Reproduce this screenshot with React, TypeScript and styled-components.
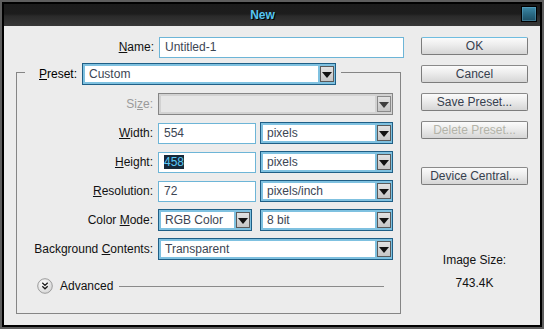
import React from 'react';
import styled, { createGlobalStyle } from 'styled-components';

const GlobalStyle = createGlobalStyle`
  html, body {
    margin: 0;
    padding: 0;
    background: #5e5e5e;
  }
  body {
    font-family: "Liberation Sans", Arial, sans-serif;
    font-size: 12px;
  }
`;

const Window = styled.div`
  width: 544px;
  height: 329px;
  box-sizing: border-box;
  border: 2px solid #5e5e5e;
  padding: 2px;
  background: #000;
  display: flex;
  flex-direction: column;
`;

const TitleBar = styled.div`
  height: 22px;
  flex: none;
  display: flex;
  align-items: flex-start;
  padding-right: 3px;
  background: linear-gradient(#1b1b1b 0%, #1d1d1d 45%, #2a2a2a 55%, #383838 100%);
`;

const Title = styled.div`
  flex: 1;
  text-align: center;
  font-weight: bold;
  font-size: 12px;
  line-height: 22px;
  color: #56c6f1;
  text-shadow: 1px 1px 0 #000;
`;

const CloseBox = styled.div`
  width: 16px;
  height: 16px;
  margin-top: 2px;
  box-sizing: border-box;
  border: 1px solid #000;
  background: linear-gradient(#3f8aa8, #2a6a84 50%, #1c4d62);
  box-shadow: inset 0 0 0 1px rgba(120, 190, 220, 0.35);
`;

const Content = styled.div`
  flex: 1;
  display: flex;
  background: #ececec;
`;

const FormCol = styled.div`
  width: 417px;
  padding-top: 10px;
  display: flex;
  flex-direction: column;
`;

const Row = styled.div`
  display: flex;
  align-items: center;
  gap: 4px;
  height: 22px;
`;

const Label = styled.div<{ $w: number; $disabled?: boolean }>`
  width: ${p => p.$w}px;
  flex: none;
  text-align: right;
  margin-right: 1px;
  color: ${p => (p.$disabled ? '#9a9a9a' : '#111')};
  white-space: nowrap;
`;

const TextField = styled.div<{ $w: number }>`
  width: ${p => p.$w}px;
  height: 21px;
  box-sizing: border-box;
  border: 1px solid #6db5d7;
  background: #fff;
  color: #3c4553;
  padding-left: 5px;
  display: flex;
  align-items: center;
`;

const Selected = styled.span`
  background: #17293a;
  color: #5ac8f6;
  line-height: 14px;
`;

const SelectBox = styled.div<{ $w: number; $disabled?: boolean; $ml?: number }>`
  width: ${p => p.$w}px;
  height: 22px;
  margin-left: ${p => p.$ml || 0}px;
  box-sizing: border-box;
  border: 1px solid ${p => (p.$disabled ? '#858585' : '#1f5f86')};
  background: ${p => (p.$disabled ? '#d2d2d2' : '#7fc1e0')};
  padding: 2px 1px 2px 2px;
  display: flex;
  gap: 2px;
`;

const SelectValue = styled.div<{ $disabled?: boolean }>`
  flex: 1;
  background: ${p => (p.$disabled ? '#e6e6e6' : '#fff')};
  color: #3c4553;
  padding-left: 4px;
  display: flex;
  align-items: center;
  white-space: nowrap;
  overflow: hidden;
`;

const ArrowBtn = styled.div<{ $disabled?: boolean }>`
  width: 14px;
  box-sizing: border-box;
  border: 1px solid ${p => (p.$disabled ? '#8a8a8a' : '#5a5a5a')};
  background: linear-gradient(#e2e2e2, #c6c6c6);
  display: flex;
  align-items: center;
  justify-content: center;
  &::after {
    content: '';
    border-left: 5px solid transparent;
    border-right: 5px solid transparent;
    border-top: 6px solid ${p => (p.$disabled ? '#3e3e3e' : '#111')};
    margin-top: 1px;
  }
`;

const Group = styled.div`
  width: 385px;
  margin: 14px 0 0 12px;
  box-sizing: border-box;
  border: 1px solid #858585;
  padding-bottom: 17px;
  display: flex;
  flex-direction: column;
`;

const Legend = styled.div`
  align-self: flex-start;
  margin: -10px 0 0 8px;
  padding: 0 5px 0 14px;
  background: #ececec;
  display: flex;
  align-items: center;
  gap: 5px;
  height: 22px;
`;

const Rows = styled.div`
  display: flex;
  flex-direction: column;
  gap: 7px;
  padding-top: 8px;
`;

const AdvancedRow = styled.div`
  display: flex;
  align-items: center;
  height: 20px;
  margin-top: 16px;
  padding: 0 16px 0 20px;
  color: #111;
`;

const AdvText = styled.span`
  margin: 0 6px 0 7px;
`;

const Rule = styled.div`
  flex: 1;
  height: 1px;
  background: #8a8a8a;
`;

const ButtonCol = styled.div`
  width: 107px;
  margin-left: auto;
  margin-right: 12px;
  padding-top: 11px;
  display: flex;
  flex-direction: column;
  gap: 10px;
`;

const Button = styled.div<{ $primary?: boolean; $disabled?: boolean; $gapTop?: number }>`
  height: 18px;
  box-sizing: border-box;
  border: 1px solid #7c7c7c;
  border-top-color: ${p => (p.$primary ? '#6fbde0' : '#8a8a8a')};
  border-radius: 2px;
  background: linear-gradient(#fbfbfb, #ececec 45%, #d6d6d6);
  color: ${p => (p.$disabled ? '#b3b3a8' : '#36404e')};
  display: flex;
  align-items: center;
  justify-content: center;
  margin-top: ${p => p.$gapTop || 0}px;
`;

const Info = styled.div<{ $gapTop: number }>`
  text-align: center;
  line-height: 14px;
  color: #111;
  margin-top: ${p => p.$gapTop}px;
`;

function Select({ w, value, disabled, ml }: { w: number; value?: string; disabled?: boolean; ml?: number }) {
  return (
    <SelectBox $w={w} $disabled={disabled} $ml={ml}>
      <SelectValue $disabled={disabled}>{value}</SelectValue>
      <ArrowBtn $disabled={disabled} />
    </SelectBox>
  );
}

function AdvancedIcon() {
  return (
    <svg width="16" height="16" viewBox="0 0 16 16">
      <defs>
        <radialGradient id="adv" cx="0.4" cy="0.35" r="0.7">
          <stop offset="0" stopColor="#ffffff" />
          <stop offset="1" stopColor="#d4d4d4" />
        </radialGradient>
      </defs>
      <circle cx="8" cy="8" r="7.3" fill="url(#adv)" stroke="#9c9c9c" strokeWidth="1" />
      <path d="M5.3 4.8 L8 7.4 L10.7 4.8 M5.3 8.2 L8 10.8 L10.7 8.2" fill="none" stroke="#1a1a1a" strokeWidth="1.3" />
    </svg>
  );
}

export default function App() {
  return (
    <>
      <GlobalStyle />
      <Window>
        <TitleBar>
          <Title>New</Title>
          <CloseBox />
        </TitleBar>
        <Content>
          <FormCol>
            <Row>
              <Label $w={150}><u>N</u>ame:</Label>
              <TextField $w={245}>Untitled-1</TextField>
            </Row>
            <Group>
              <Legend>
                <span><u>P</u>reset:</span>
                <Select w={254} value="Custom" />
              </Legend>
              <Rows>
                <Row>
                  <Label $w={136} $disabled>Si<u>z</u>e:</Label>
                  <Select w={235} disabled />
                </Row>
                <Row>
                  <Label $w={136}><u>W</u>idth:</Label>
                  <TextField $w={98}>554</TextField>
                  <Select w={133} value="pixels" />
                </Row>
                <Row>
                  <Label $w={136}><u>H</u>eight:</Label>
                  <TextField $w={98}><Selected>458</Selected></TextField>
                  <Select w={133} value="pixels" />
                </Row>
                <Row>
                  <Label $w={136}><u>R</u>esolution:</Label>
                  <TextField $w={98}>72</TextField>
                  <Select w={133} value="pixels/inch" />
                </Row>
                <Row>
                  <Label $w={136}>Color <u>M</u>ode:</Label>
                  <Select w={94} value="RGB Color" />
                  <Select w={133} value="8 bit" ml={4} />
                </Row>
                <Row>
                  <Label $w={136}>Background <u>C</u>ontents:</Label>
                  <Select w={235} value="Transparent" />
                </Row>
              </Rows>
              <AdvancedRow>
                <AdvancedIcon />
                <AdvText>Advanced</AdvText>
                <Rule />
              </AdvancedRow>
            </Group>
          </FormCol>
          <ButtonCol>
            <Button $primary>OK</Button>
            <Button>Cancel</Button>
            <Button>Save Preset...</Button>
            <Button $disabled>Delete Preset...</Button>
            <Button $gapTop={18}>Device Central...</Button>
            <Info $gapTop={58}>Image Size:</Info>
            <Info $gapTop={-1}>743.4K</Info>
          </ButtonCol>
        </Content>
      </Window>
    </>
  );
}
